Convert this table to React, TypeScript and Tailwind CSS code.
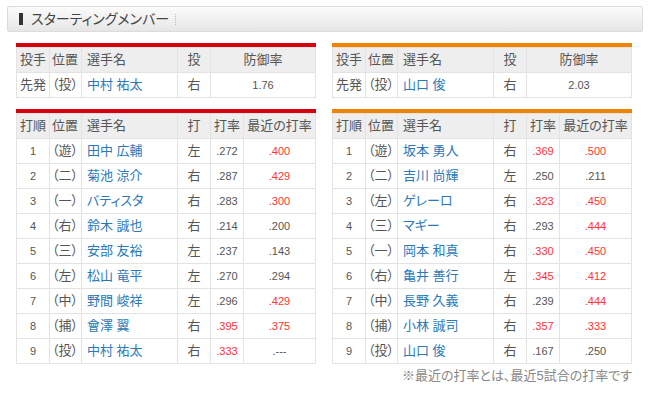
import React from "react";

type Batter = {
  order: number;
  pos: string;
  name: string;
  hand: string;
  avg: string;
  avgHot: boolean;
  recent: string;
  recentHot: boolean;
};

interface TeamData {
  accent: string;
  pitcher: { name: string; hand: string; era: string };
  batters: Batter[];
}

const b = (
  order: number,
  pos: string,
  name: string,
  hand: string,
  avg: string,
  avgHot: boolean,
  recent: string,
  recentHot: boolean
): Batter => ({ order, pos, name, hand, avg, avgHot, recent, recentHot });

const carp: TeamData = {
  accent: "bg-[#d7000f]",
  pitcher: { name: "中村 祐太", hand: "右", era: "1.76" },
  batters: [
    b(1, "遊", "田中 広輔", "左", ".272", false, ".400", true),
    b(2, "二", "菊池 涼介", "右", ".287", false, ".429", true),
    b(3, "一", "バティスタ", "右", ".283", false, ".300", true),
    b(4, "右", "鈴木 誠也", "右", ".214", false, ".200", false),
    b(5, "三", "安部 友裕", "左", ".237", false, ".143", false),
    b(6, "左", "松山 竜平", "左", ".270", false, ".294", false),
    b(7, "中", "野間 峻祥", "左", ".296", false, ".429", true),
    b(8, "捕", "會澤 翼", "右", ".395", true, ".375", true),
    b(9, "投", "中村 祐太", "右", ".333", true, ".---", false),
  ],
};

const giants: TeamData = {
  accent: "bg-[#f08300]",
  pitcher: { name: "山口 俊", hand: "右", era: "2.03" },
  batters: [
    b(1, "遊", "坂本 勇人", "右", ".369", true, ".500", true),
    b(2, "二", "吉川 尚輝", "左", ".250", false, ".211", false),
    b(3, "左", "ゲレーロ", "右", ".323", true, ".450", true),
    b(4, "三", "マギー", "右", ".293", false, ".444", true),
    b(5, "一", "岡本 和真", "右", ".330", true, ".450", true),
    b(6, "右", "亀井 善行", "左", ".345", true, ".412", true),
    b(7, "中", "長野 久義", "右", ".239", false, ".444", true),
    b(8, "捕", "小林 誠司", "右", ".357", true, ".333", true),
    b(9, "投", "山口 俊", "右", ".167", false, ".250", false),
  ],
};

const th = "h-[25px] border border-[#e3e3e3] bg-[#eeeeee] font-normal";
const td = "h-[25px] border border-[#e3e3e3] bg-white";
const num = "text-center font-['Liberation_Sans'] text-[11px]";

const PitcherTable: React.FC<{ team: TeamData }> = ({ team }) => (
  <div>
    <div className={`h-1 ${team.accent}`} />
    <table className="w-[300px] table-fixed border-collapse">
      <colgroup>
        <col className="w-[33px]" />
        <col className="w-[32px]" />
        <col className="w-[96px]" />
        <col className="w-[33px]" />
        <col />
      </colgroup>
      <thead>
        <tr>
          <th className={`${th} pl-[3px] text-left`}>投手</th>
          <th className={`${th} pl-[2px] text-left`}>位置</th>
          <th className={`${th} pl-[5px] text-left`}>選手名</th>
          <th className={`${th} text-center`}>投</th>
          <th className={`${th} text-center`}>防御率</th>
        </tr>
      </thead>
      <tbody>
        <tr>
          <td className={`${td} pl-[3px]`}>先発</td>
          <td className={`${td} pl-[2px]`}>（投）</td>
          <td className={`${td} pl-[5px] text-[#2a79b9]`}>{team.pitcher.name}</td>
          <td className={`${td} text-center`}>{team.pitcher.hand}</td>
          <td className={`${td} ${num}`}>{team.pitcher.era}</td>
        </tr>
      </tbody>
    </table>
  </div>
);

const BattingTable: React.FC<{ team: TeamData }> = ({ team }) => (
  <div>
    <div className={`h-1 ${team.accent}`} />
    <table className="w-[300px] table-fixed border-collapse">
      <colgroup>
        <col className="w-[33px]" />
        <col className="w-[32px]" />
        <col className="w-[96px]" />
        <col className="w-[33px]" />
        <col className="w-[33px]" />
        <col />
      </colgroup>
      <thead>
        <tr>
          <th className={`${th} pl-[3px] text-left`}>打順</th>
          <th className={`${th} pl-[2px] text-left`}>位置</th>
          <th className={`${th} pl-[5px] text-left`}>選手名</th>
          <th className={`${th} text-center`}>打</th>
          <th className={`${th} text-center`}>打率</th>
          <th className={`${th} text-center`}>最近の打率</th>
        </tr>
      </thead>
      <tbody>
        {team.batters.map((p) => (
          <tr key={p.order}>
            <td className={`${td} ${num}`}>{p.order}</td>
            <td className={`${td} pl-[2px]`}>（{p.pos}）</td>
            <td className={`${td} pl-[5px] text-[#2a79b9]`}>{p.name}</td>
            <td className={`${td} text-center`}>{p.hand}</td>
            <td className={`${td} ${num} ${p.avgHot ? "text-[#ff3333]" : ""}`}>{p.avg}</td>
            <td className={`${td} ${num} ${p.recentHot ? "text-[#ff3333]" : ""}`}>{p.recent}</td>
          </tr>
        ))}
      </tbody>
    </table>
  </div>
);

export default function App() {
  return (
    <div className="h-[399px] w-[650px] bg-white pt-[6px] font-['Liberation_Sans','Noto_Sans_CJK_JP',sans-serif] text-[13px] text-[#555] [font-feature-settings:'palt']">
      {/* Section title */}
      <div className="mx-[7px] flex h-[26px] items-center rounded-[2px] border border-[#dcdcdc] bg-gradient-to-b from-[#fbfbfb] via-[#f1f1f1] to-[#e6e6e6] pl-[11px]">
        <span className="h-3 w-1 bg-[#333]" />
        <span className="ml-[8px] text-[14px] text-[#444]">スターティングメンバー</span>
        <span className="ml-[6px] h-[11px] border-l border-dotted border-[#bbb]" />
      </div>

      <div className="mt-[11px] flex gap-4 pl-4">
        <PitcherTable team={carp} />
        <PitcherTable team={giants} />
      </div>

      <div className="mt-[11px] flex gap-4 pl-4">
        <BattingTable team={carp} />
        <BattingTable team={giants} />
      </div>

      <p className="mt-[2px] w-[632px] text-right text-[13px] text-[#888]">
        ※最近の打率とは、最近5試合の打率です
      </p>
    </div>
  );
}
